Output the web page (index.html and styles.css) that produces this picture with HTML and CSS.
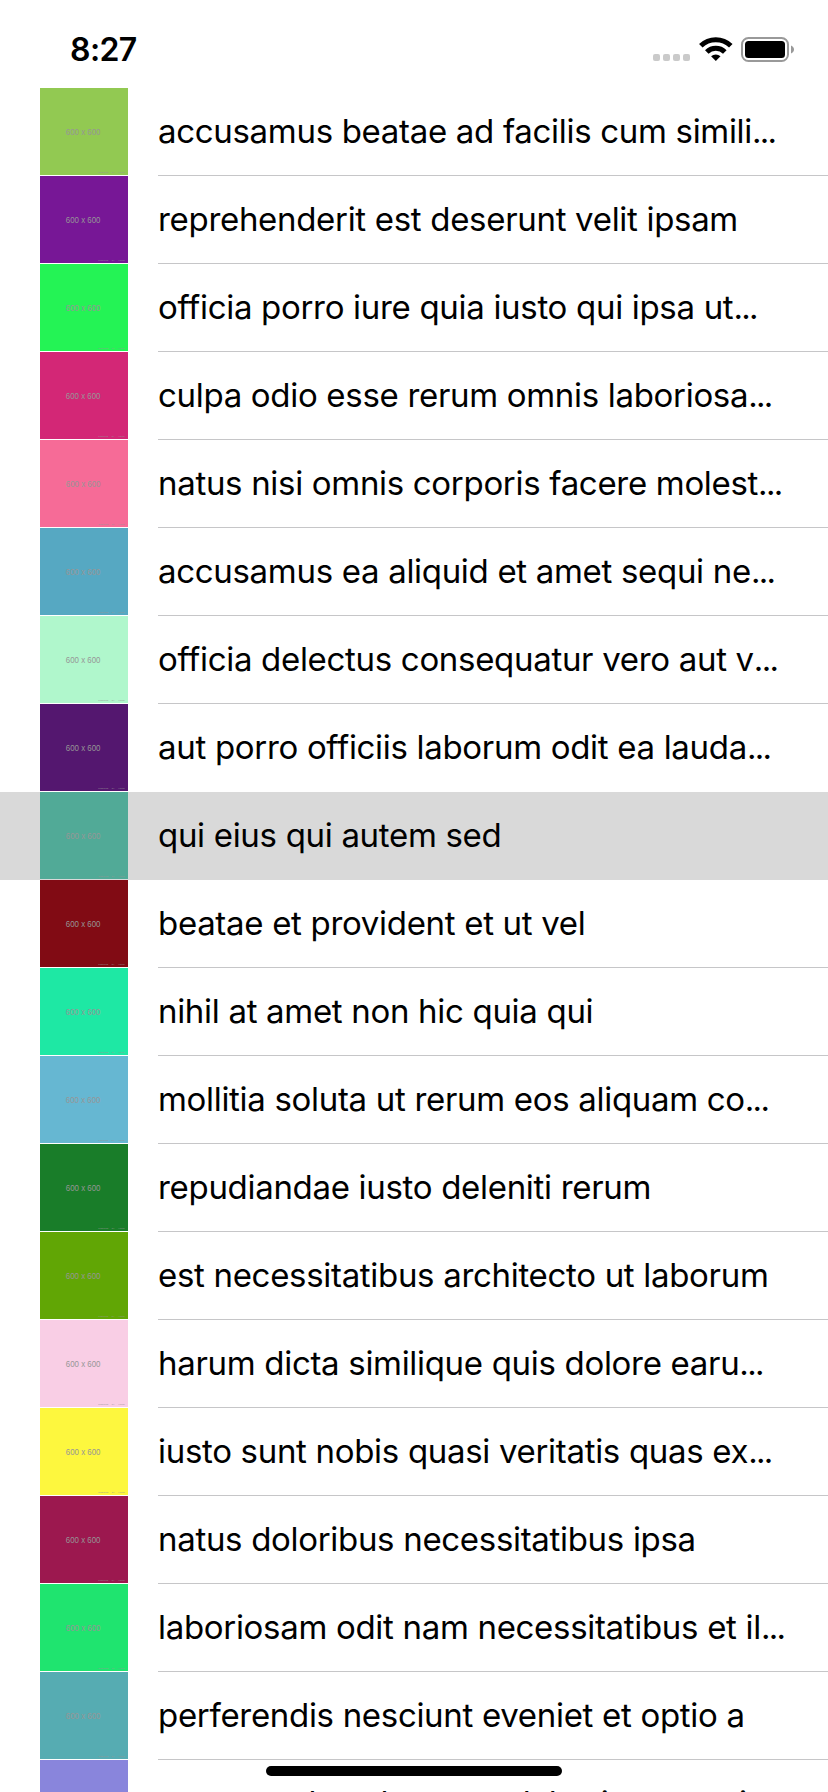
FILE: index.html
```html
<!DOCTYPE html>
<html lang="la"><head><meta charset="utf-8"><title>Photos</title><link rel="stylesheet" href="styles.css"></head>
<body>
<header class="status">
<span class="time">8:27</span>
<div class="indicators">
<svg class="signal" width="38" height="8" viewBox="0 0 38 8" fill="#cacaca"><rect width="7" height="7" rx="2"/><rect x="10" width="7" height="7" rx="2"/><rect x="20" width="7" height="7" rx="2"/><rect x="30" width="7" height="7" rx="2"/></svg>
<svg class="wifi" width="34" height="24" viewBox="0 0 34 24" fill="none" stroke="#000" stroke-width="5"><path d="M1.800 8.800a21.400 21.400 0 0 1 30 0"/><path d="M7.800 14.900a12.700 12.700 0 0 1 18 0"/><path d="M16.800 24l-4.700-4.700a6.800 6.800 0 0 1 9.400 0z" fill="#000" stroke="none"/></svg>
<svg class="battery" width="54" height="26" viewBox="0 0 54 26"><rect x="1" y="1" width="46" height="23" rx="6.5" fill="none" stroke="#999" stroke-width="2"/><rect x="4" y="4" width="40" height="17" rx="3.5"/><path d="M50 8.500c4 1.500 4 6.500 0 8z" fill="#999"/></svg>
</div>
</header>
<ul class="list" id="list"></ul>
<div class="home"></div>
<script src="list.js"></script>
</body></html>
```
FILE: styles.css
```css
*{box-sizing:border-box}
body{margin:0;width:828px;height:1792px;overflow:hidden;background:#fff;color:#000;font-family:Inter,"Liberation Sans",sans-serif;position:relative}
.status{height:88px;display:flex;justify-content:space-between;padding:0 33px 0 70px}
.time{font-size:32px;font-weight:600;line-height:40px;padding-top:30px;letter-spacing:-.6px}
.indicators{display:flex;align-items:flex-start;padding-top:37px}
.signal{margin:17px 8px 0 0}
.wifi{margin-right:8px}
.list{list-style:none;margin:0;padding:0}
.row{height:88px;display:flex;padding-left:40px}
.thumb{width:88px;height:87px;margin-right:30px;flex:none;display:grid;grid-template-rows:78px 9px;color:#969696;font-family:"Liberation Sans",sans-serif}
.size{font-size:9.5px;line-height:10px;padding-top:39px;text-align:center;padding-right:2px;transform:scaleX(.83)}
.credit{font-size:2.5px;line-height:3px;text-align:right;padding:5px 3px 0 0;word-spacing:3px}
.title{flex:1;height:88px;border-bottom:1px solid #c6c6c8;font-size:33px;line-height:87px;letter-spacing:-.31px;white-space:nowrap;overflow:hidden}
.dots{letter-spacing:-1.7px}
.row.selected{background:#d9d9d9}
.row.before .title,.row.selected .title{border-color:transparent}
.home{position:absolute;left:266px;top:1766px;width:296px;height:10px;border-radius:5px;background:#000}
```
FILE: list.js
```js
const photos = [
  ["#92c952", "accusamus beatae ad facilis cum simili..."],
  ["#771796", "reprehenderit est deserunt velit ipsam"],
  ["#24f355", "officia porro iure quia iusto qui ipsa ut..."],
  ["#d32776", "culpa odio esse rerum omnis laboriosa..."],
  ["#f66b97", "natus nisi omnis corporis facere molest..."],
  ["#56a8c2", "accusamus ea aliquid et amet sequi ne..."],
  ["#b0f7cc", "officia delectus consequatur vero aut v..."],
  ["#54176f", "aut porro officiis laborum odit ea lauda..."],
  ["#51aa97", "qui eius qui autem sed"],
  ["#810b14", "beatae et provident et ut vel"],
  ["#1ee8a4", "nihil at amet non hic quia qui"],
  ["#66b7d2", "mollitia soluta ut rerum eos aliquam co..."],
  ["#197d29", "repudiandae iusto deleniti rerum"],
  ["#61a605", "est necessitatibus architecto ut laborum"],
  ["#f9cee5", "harum dicta similique quis dolore earu..."],
  ["#fdf73e", "iusto sunt nobis quasi veritatis quas ex..."],
  ["#9c184f", "natus doloribus necessitatibus ipsa"],
  ["#1fe46f", "laboriosam odit nam necessitatibus et il..."],
  ["#56acb2", "perferendis nesciunt eveniet et optio a"],
  ["#8985dc", "assumenda voluptatem laboriosam enim..."]
];
const list = document.getElementById("list");
photos.forEach(([color, title], i) => {
  const state = i === 8 ? " selected" : i === 7 ? " before" : "";
  const text = title.replace("...", '<span class="dots">...</span>');
  list.insertAdjacentHTML("beforeend", `<li class="row${state}"><div class="thumb" style="background:${color}"><span class="size">600 x 600</span><span class="credit">Powered by HTML</span></div><span class="title">${text}</span></li>`);
});
```
